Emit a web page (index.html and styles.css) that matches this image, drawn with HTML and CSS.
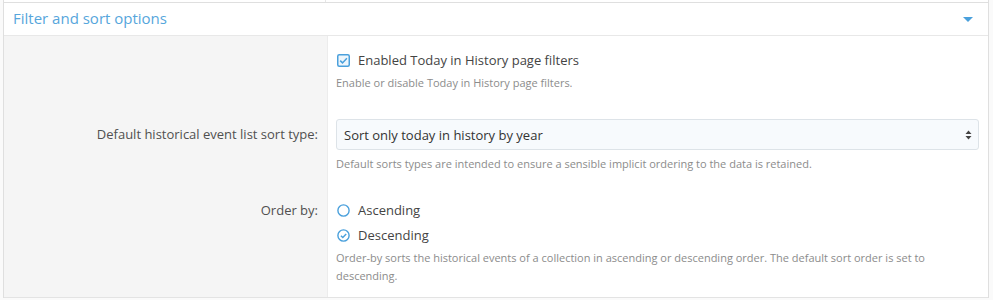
FILE: index.html
```html
<!DOCTYPE html>
<html lang="en">
<head>
  <meta charset="UTF-8">
  <title>Filter and sort options</title>
  <link rel="stylesheet" href="styles.css">
</head>
<body>
  <div class="prev_strip"><span></span></div>
  <div class="block">
    <h2 class="block_header">
      Filter and sort options
      <span class="collapse_arrow"></span>
    </h2>
    <div class="block_body">
      <div class="form_row">
        <div class="row_label"></div>
        <div class="row_value">
          <label class="choice">
            <svg class="choice_icon" width="13" height="13" viewBox="0 0 13 13">
              <rect x="0.75" y="0.75" width="11.5" height="11.5" rx="1.5" fill="#eef6fc" stroke="#4aa0dc" stroke-width="1.5"/>
              <path d="M3.2 6.6 L5.5 8.9 L9.9 4.2" fill="none" stroke="#4aa0dc" stroke-width="1.5"/>
            </svg>
            Enabled Today in History page filters
          </label>
          <div class="hint">Enable or disable Today in History page filters.</div>
        </div>
      </div>
      <div class="form_row">
        <div class="row_label label_select">Default historical event list sort type:</div>
        <div class="row_value">
          <div class="fake_select">
            <span>Sort only today in history by year</span>
            <svg width="7" height="10" viewBox="0 0 7 10">
              <path d="M3.5 0.5 L6.5 4 L0.5 4 Z M3.5 9.5 L6.5 6 L0.5 6 Z" fill="#444"/>
            </svg>
          </div>
          <div class="hint">Default sorts types are intended to ensure a sensible implicit ordering to the data is retained.</div>
        </div>
      </div>
      <div class="form_row">
        <div class="row_label label_radio">Order by:</div>
        <div class="row_value">
          <label class="choice">
            <svg class="choice_icon" width="13" height="13" viewBox="0 0 13 13">
              <circle cx="6.5" cy="6.5" r="5.6" fill="#fff" stroke="#4aa0dc" stroke-width="1.4"/>
            </svg>
            Ascending
          </label>
          <label class="choice choice_second">
            <svg class="choice_icon" width="13" height="13" viewBox="0 0 13 13">
              <circle cx="6.5" cy="6.5" r="5.6" fill="#fff" stroke="#4aa0dc" stroke-width="1.4"/>
              <path d="M3.9 6.7 L5.8 8.5 L9.2 4.9" fill="none" stroke="#4aa0dc" stroke-width="1.4"/>
            </svg>
            Descending
          </label>
          <div class="hint hint_long">Order-by sorts the historical events of a collection in ascending or descending order. The default sort order is set to descending.</div>
        </div>
      </div>
    </div>
  </div>
</body>
</html>
```

FILE: styles.css
```css
* {
  box-sizing: border-box;
}
body {
  margin: 0;
  background: #fafafa;
  font-family: "Open Sans", "Noto Sans", sans-serif;
  color: #505050;
}
.prev_strip {
  height: 2px;
  margin: 0 4px 0 3px;
  background: #fff;
  border-left: 1px solid #dfdfdf;
  border-right: 1px solid #dfdfdf;
}
.prev_strip span {
  display: block;
  width: 322px;
  height: 2px;
  border-right: 1px solid #e6e6e6;
}
.block {
  margin: 0 4px 0 3px;
  border: 1px solid #dfdfdf;
  border-bottom: none;
  background: #fff;
}
.block_header {
  position: relative;
  margin: 0;
  height: 33px;
  padding: 5px 9px 0;
  font-size: 15px;
  font-weight: 400;
  color: #56a6dc;
  background: #fff;
  border-bottom: 1px solid #e8e8e8;
}
.collapse_arrow {
  position: absolute;
  right: 15px;
  top: 14px;
  width: 0;
  height: 0;
  border-left: 5px solid transparent;
  border-right: 5px solid transparent;
  border-top: 5px solid #4aa0dc;
}
.block_body {
  border-bottom: 1px solid #e3e3e3;
}
.form_row {
  display: grid;
  grid-template-columns: 324px 1fr;
}
.row_label {
  background: #f5f5f5;
  border-right: 1px solid #ececec;
  text-align: right;
  padding-right: 9px;
  font-size: 13px;
  line-height: 20px;
}
.label_select {
  padding-top: 20px;
}
.label_radio {
  padding-top: 13px;
}
.row_value {
  padding: 14px 9px 14px 8px;
}
.form_row:first-child .row_value {
  padding-bottom: 12px;
}
.form_row:last-child .row_value {
  padding-top: 13px;
  padding-bottom: 12px;
}
.choice {
  display: flex;
  align-items: center;
  gap: 8px;
  height: 20px;
  padding-left: 1px;
  font-size: 13px;
  color: #444;
}
.choice_second {
  margin-top: 5px;
}
.choice_icon {
  flex: none;
}
.hint {
  margin-top: 4px;
  font-size: 11px;
  line-height: 18px;
  color: #8c8c8c;
}
.hint_long {
  margin-top: 4px;
  padding-right: 30px;
}
.fake_select {
  display: flex;
  align-items: center;
  justify-content: space-between;
  height: 31px;
  margin-top: 1px;
  padding: 0 6px 0 7px;
  background: #f7fafd;
  border: 1px solid #dde3e8;
  border-radius: 3px;
  font-size: 13px;
  color: #333;
}
.fake_select + .hint {
  margin-top: 5px;
}
```
